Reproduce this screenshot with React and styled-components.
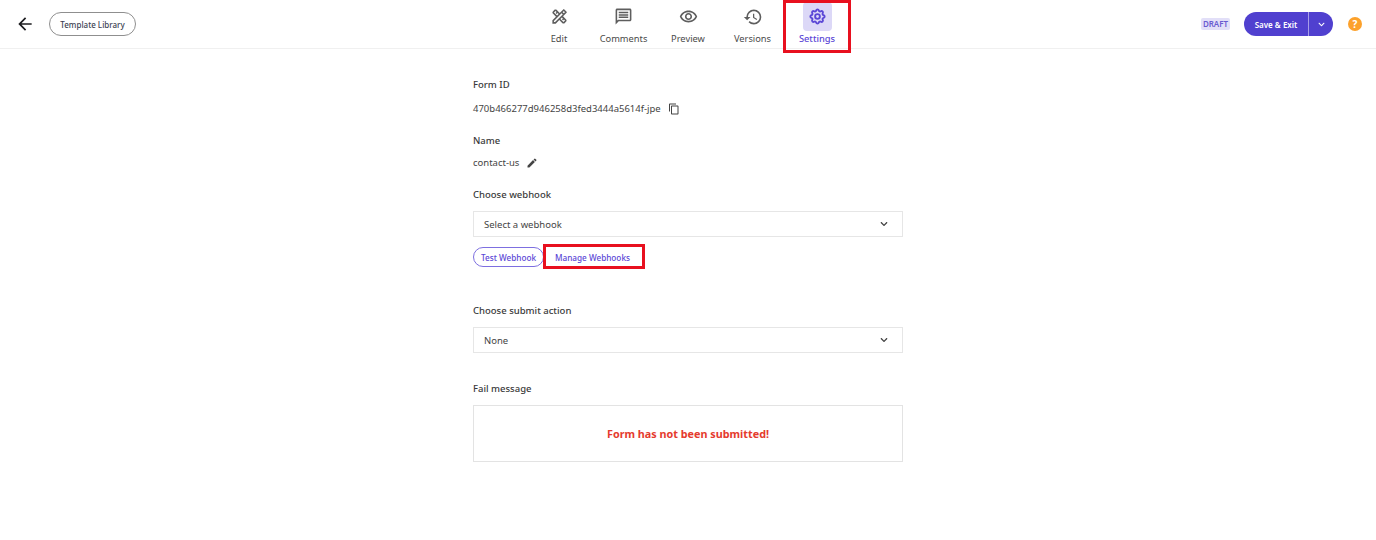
import React from "react";
import styled, { createGlobalStyle } from "styled-components";
import {
  MdArrowBack,
  MdOutlineDesignServices,
  MdOutlineMessage,
  MdOutlineRemoveRedEye,
  MdHistory,
  MdOutlineContentCopy,
  MdEdit,
} from "react-icons/md";
import { FaChevronDown } from "react-icons/fa";
import { HiOutlineCog } from "react-icons/hi";

const Global = createGlobalStyle`
  html, body { margin: 0; padding: 0; background: #fff; }
  body { font-family: "Noto Sans", "Open Sans", sans-serif; color: #2f3237; }
  * { box-sizing: border-box; }
`;

const Page = styled.div`
  width: 1376px;
  height: 540px;
  overflow: hidden;
`;

const Header = styled.header`
  height: 49px;
  border-bottom: 1px solid #f0f0f0;
  display: grid;
  grid-template-columns: 1fr auto 1fr;
  align-items: start;
`;

const Left = styled.div`
  display: flex;
  align-items: center;
  height: 48px;
  padding-left: 15px;
  gap: 14px;
  color: #1c1c1f;
`;

const OutlineButton = styled.button`
  height: 24px;
  width: 87px;
  padding: 0;
  border: 1px solid #8f8f8f;
  border-radius: 12px;
  background: #fff;
  font: 500 8px "Noto Sans", sans-serif;
  color: #3d3f52;
`;

const Nav = styled.nav`
  display: flex;
`;

const NavItem = styled.div`
  position: relative;
  width: 64.5px;
  height: 48px;
  display: flex;
  flex-direction: column;
  align-items: center;
  padding-top: 2px;
  font-size: 9.3px;
  line-height: 13px;
  font-weight: ${(p) => (p.$active ? 500 : 400)};
  color: ${(p) => (p.$active ? "#5b47d6" : "#4a4a4a")};
`;

const NavIcon = styled.span`
  width: 29px;
  height: 29px;
  border-radius: 4px;
  display: flex;
  align-items: center;
  justify-content: center;
  background: ${(p) => (p.$active ? "#dcd8f7" : "transparent")};
  color: ${(p) => (p.$active ? "#5b47d6" : "#5e5e5e")};
  margin-bottom: 1px;
`;

const Highlight = styled.span`
  position: absolute;
  border: 3px solid #e8101f;
  pointer-events: none;
  top: ${(p) => p.$top}px;
  left: ${(p) => p.$left}px;
  width: ${(p) => p.$width}px;
  height: ${(p) => p.$height}px;
`;

const Right = styled.div`
  display: flex;
  align-items: center;
  justify-content: flex-end;
  height: 48px;
  padding-right: 14px;
`;

const Badge = styled.span`
  height: 12px;
  width: 29px;
  text-align: center;
  border-radius: 2px;
  background: #e2dff8;
  color: #6a5bd0;
  font-size: 8px;
  font-weight: 600;
  line-height: 12px;
  margin-right: 14px;
`;

const SplitButton = styled.div`
  display: flex;
  height: 24px;
  width: 89px;
  border-radius: 12px;
  overflow: hidden;
  background: #5040cf;
  color: #fff;
  font-size: 8px;
  font-weight: 600;
  margin-right: 15px;
`;

const SplitMain = styled.span`
  flex: 1;
  display: flex;
  align-items: center;
  justify-content: center;
  border-right: 1px solid #a79ee8;
`;

const SplitCaret = styled.span`
  width: 24px;
  display: flex;
  align-items: center;
  justify-content: center;
`;

const Help = styled.span`
  width: 14px;
  height: 14px;
  border-radius: 50%;
  background: #fca12b;
  color: #fff;
  font-size: 10px;
  font-weight: 700;
  display: flex;
  align-items: center;
  justify-content: center;
`;

const Content = styled.main`
  width: 430px;
  margin: 0 auto;
  padding-top: 29px;
  position: relative;
`;

const Label = styled.div`
  font-size: 9.5px;
  font-weight: 500;
  line-height: 14px;
  color: #3a3a3a;
  margin-top: ${(p) => p.$mt || 0}px;
`;

const Value = styled.div`
  display: flex;
  align-items: center;
  gap: 7px;
  font-size: 9.5px;
  line-height: 14px;
  color: #444;
  margin-top: ${(p) => p.$mt || 0}px;
`;

const SelectBox = styled.div`
  height: 26px;
  margin-top: 9px;
  border: 1px solid #e6e6e6;
  display: flex;
  align-items: center;
  justify-content: space-between;
  padding: 0 14px 0 10px;
  font-size: 9.5px;
  color: #444;
`;

const ButtonRow = styled.div`
  display: flex;
  align-items: center;
  margin-top: 10px;
  position: relative;
`;

const PillButton = styled.button`
  height: 20px;
  width: 71px;
  padding: 0;
  border-radius: 10px;
  border: 1px solid #7d6fe0;
  background: #fff;
  font: 500 8.2px "Noto Sans", sans-serif;
  color: #5b47d6;
`;

const TextButton = styled.button`
  height: 20px;
  padding: 0 0 0 11px;
  border: 0;
  background: none;
  font: 500 8.2px "Noto Sans", sans-serif;
  color: #5b47d6;
`;

const MessageBox = styled.div`
  height: 57px;
  margin-top: 9px;
  border: 1px solid #e3e3e3;
  display: flex;
  align-items: center;
  justify-content: center;
  font-size: 10.8px;
  font-weight: 700;
  color: #e53b2e;
`;

const nav = [
  ["Edit", <MdOutlineDesignServices size={19} key="i" />],
  ["Comments", <MdOutlineMessage size={19} key="i" />],
  ["Preview", <MdOutlineRemoveRedEye size={19} key="i" />],
  ["Versions", <MdHistory size={20} key="i" />],
  ["Settings", <HiOutlineCog size={19} strokeWidth={2.4} key="i" />],
];

export default function App() {
  return (
    <Page>
      <Global />
      <Header>
        <Left>
          <MdArrowBack size={20} />
          <OutlineButton>Template Library</OutlineButton>
        </Left>
        <Nav>
          {nav.map(([label, icon]) => {
            const active = label === "Settings";
            return (
              <NavItem key={label} $active={active}>
                <NavIcon $active={active}>{icon}</NavIcon>
                {label}
                {active && <Highlight $top={0} $left={-2} $width={68} $height={53} />}
              </NavItem>
            );
          })}
        </Nav>
        <Right>
          <Badge>DRAFT</Badge>
          <SplitButton>
            <SplitMain>Save &amp; Exit</SplitMain>
            <SplitCaret>
              <FaChevronDown size={7} />
            </SplitCaret>
          </SplitButton>
          <Help>?</Help>
        </Right>
      </Header>
      <Content>
        <Label>Form ID</Label>
        <Value $mt={10}>
          470b466277d946258d3fed3444a5614f-jpe
          <MdOutlineContentCopy size={12} />
        </Value>
        <Label $mt={18}>Name</Label>
        <Value $mt={8}>
          contact-us
          <MdEdit size={12} />
        </Value>
        <Label $mt={18}>Choose webhook</Label>
        <SelectBox>
          Select a webhook
          <FaChevronDown size={8} />
        </SelectBox>
        <ButtonRow>
          <PillButton>Test Webhook</PillButton>
          <TextButton>Manage Webhooks</TextButton>
          <Highlight $top={-3} $left={70} $width={102} $height={25} />
        </ButtonRow>
        <Label $mt={37}>Choose submit action</Label>
        <SelectBox>
          None
          <FaChevronDown size={8} />
        </SelectBox>
        <Label $mt={29}>Fail message</Label>
        <MessageBox>Form has not been submitted!</MessageBox>
      </Content>
    </Page>
  );
}
